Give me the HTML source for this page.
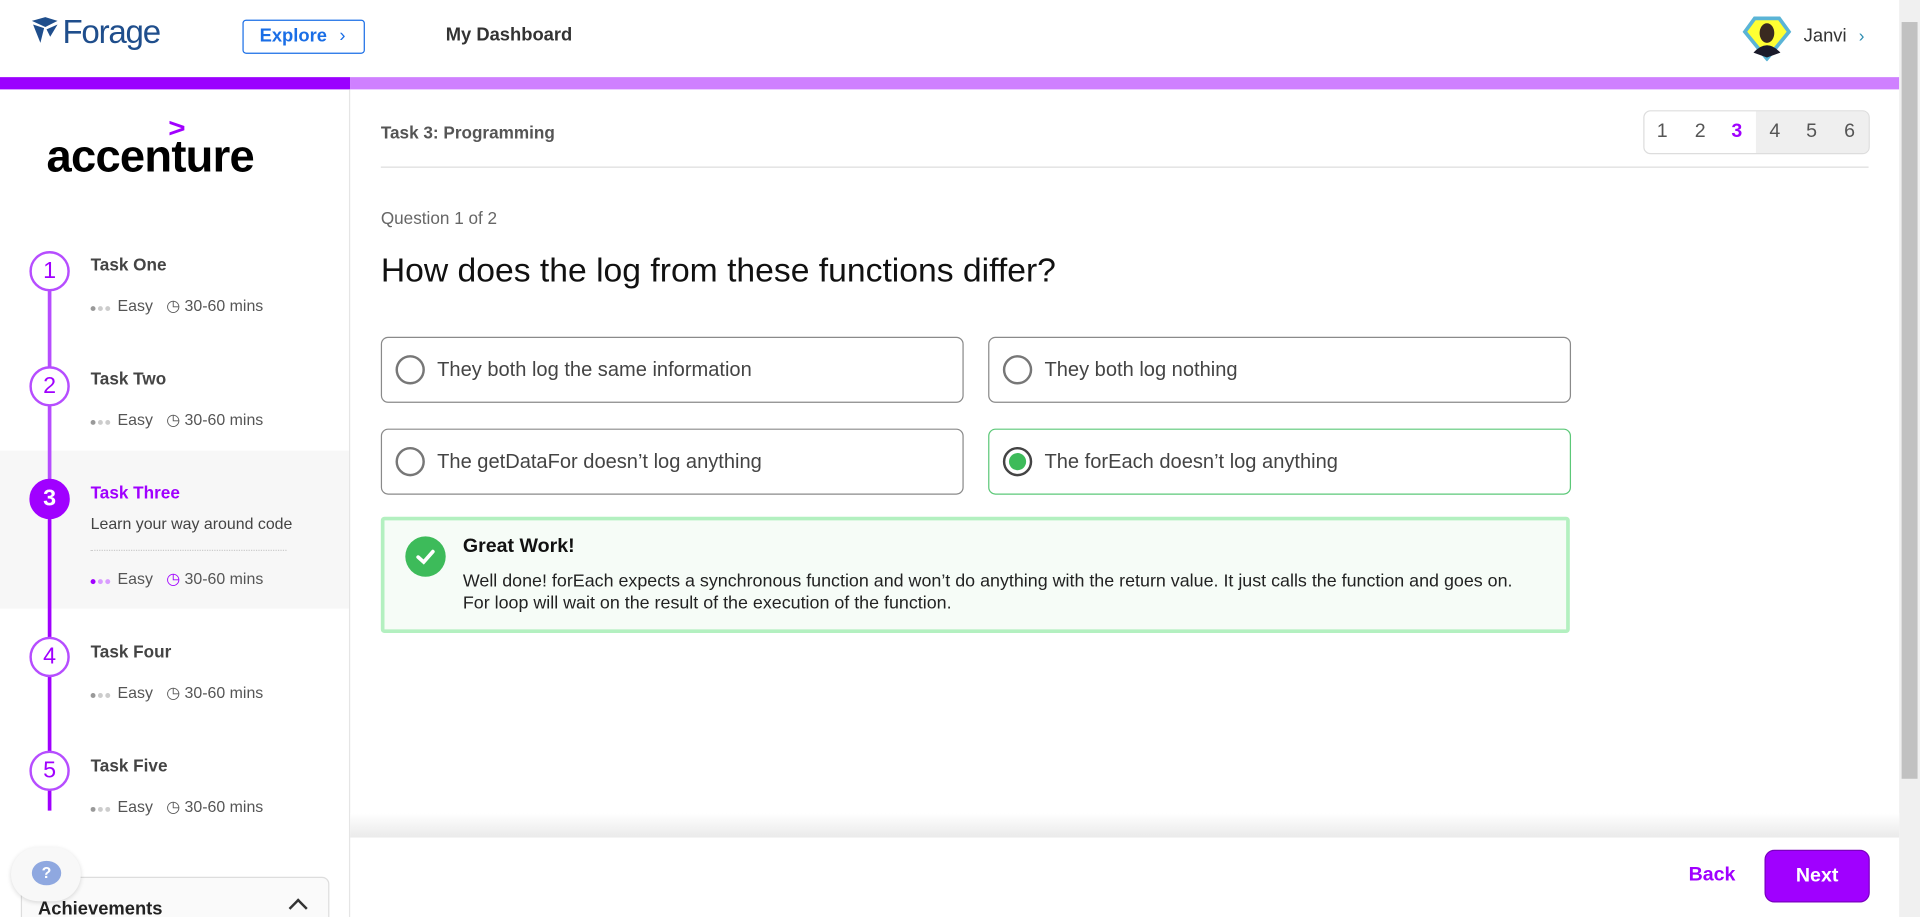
<!DOCTYPE html>
<html><head><meta charset="utf-8"><style>
*{box-sizing:border-box;margin:0;padding:0}
html,body{width:1920px;height:917px;overflow:hidden;background:#fff;font-family:"Liberation Sans",sans-serif}
#w{position:absolute;left:0;top:0;width:1568px;height:749px;transform:scale(1.22449);transform-origin:0 0;overflow:hidden}
.a{position:absolute}
.t{color:#444;font-size:14px;font-weight:bold}
.m{color:#555;font-size:13px}
.c{position:absolute;left:24px;width:33px;height:33px;border-radius:50%;border:2px solid #b64dff;background:#fff;color:#a000ff;font-size:19px;text-align:center;line-height:29px}
.opt{position:absolute;height:54px;border:1px solid #8a8a8a;border-radius:6px;font-size:16.4px;color:#444;padding-left:45px;line-height:52px;width:476px}
.opt i{position:absolute;left:11px;top:14px;width:24px;height:24px;border:2px solid #777;border-radius:50%}
.dots{display:inline-block;vertical-align:middle;margin-right:4px}
.dots b{display:inline-block;width:4px;height:4px;border-radius:50%;background:#ccc;margin-right:2px;vertical-align:middle}
</style></head><body><div id="w">
<div class="a" style="left:25px;top:13px;width:22px;height:22px">
<svg width="24" height="24" viewBox="0 0 24 24"><path d="M1 4 L12 1 L22 4 L12 9Z" fill="#1f4e8c"/><path d="M2 7 L11 10 L8 22Z" fill="#1f4e8c"/><path d="M13 11 L22 7 L16 17Z" fill="#1f4e8c"/></svg></div>
<div class="a" style="left:51px;top:11px;font-size:27px;color:#1f4e8c;letter-spacing:-1px">Forage</div>
<div class="a" style="left:198px;top:16px;width:100px;height:28px;border:1px solid #1a6ee6;border-radius:3px;color:#1a6ee6;font-size:15px;font-weight:bold;line-height:26px;padding-left:13px">Explore <span style="font-weight:normal;margin-left:6px">&#x203A;</span></div>
<div class="a" style="left:364px;top:20px;font-size:15px;font-weight:bold;color:#333">My Dashboard</div>
<div class="a" style="left:1423px;top:13px;width:40px;height:37px">
<svg width="40" height="37" viewBox="0 0 40 37"><path d="M10 2 H30 L38 13 L20 35 L2 13Z" fill="#ffff33" stroke="#5ab4d6" stroke-width="3"/><ellipse cx="20" cy="14" rx="6" ry="8" fill="#3a2a20"/><path d="M9 30 Q20 18 31 30 L20 34Z" fill="#1a1a2a"/></svg></div>
<div class="a" style="left:1473px;top:21px;font-size:15px;color:#333">Janvi</div>
<div class="a" style="left:1518px;top:21px;font-size:14px;color:#2a8bb0">&#x203A;</div>
<div class="a" style="left:0;top:63px;width:286px;height:10px;background:#9b00ff"></div>
<div class="a" style="left:286px;top:63px;width:1265px;height:10px;background:#cf80ff"></div>
<div class="a" style="left:1551px;top:0;width:17px;height:749px;background:#f0f0f0"></div>
<div class="a" style="left:1553px;top:18px;width:13px;height:618px;background:#c1c1c1"></div>
<div class="a" style="left:285px;top:73px;width:1px;height:676px;background:#e5e5e5"></div>
<div class="a" style="left:138px;top:92px;font-size:22px;font-weight:bold;color:#a100ff;transform:scaleX(1.1)">&gt;</div>
<div class="a" style="left:38px;top:107px;font-size:37px;font-weight:bold;color:#000;letter-spacing:-0.6px">accenture</div>
<div class="a" style="left:0;top:368px;width:285px;height:129px;background:#f7f7f7"></div>
<div class="a" style="left:39px;top:235px;width:3px;height:170px;background:#b64dff"></div>
<div class="a" style="left:39px;top:405px;width:3px;height:257px;background:#a000ff"></div>
<div class="c" style="top:205px">1</div>
<div class="c" style="top:299px">2</div>
<div class="c" style="top:391px;background:#a000ff;border-color:#a000ff;color:#fff;font-weight:bold">3</div>
<div class="c" style="top:520px">4</div>
<div class="c" style="top:613px">5</div>
<div class="a t" style="left:74px;top:208px">Task One</div>
<div class="a m" style="left:74px;top:242px"><span class="dots"><b style="background:#999"></b><b></b><b></b></span>Easy &nbsp; &#9719; 30-60 mins</div>
<div class="a t" style="left:74px;top:301px">Task Two</div>
<div class="a m" style="left:74px;top:335px"><span class="dots"><b style="background:#999"></b><b></b><b></b></span>Easy &nbsp; &#9719; 30-60 mins</div>
<div class="a t" style="left:74px;top:394px;color:#a000ff">Task Three</div>
<div class="a m" style="left:74px;top:420px;color:#444">Learn your way around code</div>
<div class="a" style="left:74px;top:449px;width:160px;border-top:1px dotted #ccc"></div>
<div class="a m" style="left:74px;top:465px"><span class="dots"><b style="background:#a000ff"></b><b style="background:#d99cff"></b><b style="background:#d99cff"></b></span>Easy &nbsp; <span style="color:#a000ff">&#9719;</span> 30-60 mins</div>
<div class="a t" style="left:74px;top:524px">Task Four</div>
<div class="a m" style="left:74px;top:558px"><span class="dots"><b style="background:#999"></b><b></b><b></b></span>Easy &nbsp; &#9719; 30-60 mins</div>
<div class="a t" style="left:74px;top:617px">Task Five</div>
<div class="a m" style="left:74px;top:651px"><span class="dots"><b style="background:#999"></b><b></b><b></b></span>Easy &nbsp; &#9719; 30-60 mins</div>
<div class="a" style="left:17px;top:716px;width:252px;height:50px;border:1px solid #ddd;border-radius:6px;background:#fafafa"></div>
<div class="a" style="left:31px;top:734px;font-size:15px;font-weight:bold;color:#222">Achievements</div>
<div class="a" style="left:238px;top:736px;width:11px;height:11px;border-left:2px solid #333;border-top:2px solid #333;transform:rotate(45deg)"></div>
<div class="a" style="left:9px;top:692px;width:57px;height:44px;border-radius:22px;background:#f8f8f8;box-shadow:0 1px 4px rgba(0,0,0,.15)"></div>
<div class="a" style="left:26px;top:703px;width:24px;height:20px;border-radius:50%;background:#8fa8e0;color:#fff;font-size:13px;font-weight:bold;text-align:center;line-height:20px">?</div>
<div class="a" style="left:311px;top:100px;font-size:14px;font-weight:bold;color:#555">Task 3: Programming</div>
<div class="a" style="left:311px;top:136px;width:1215px;height:1px;background:#ddd"></div>
<div class="a" style="left:1342px;top:90px;width:185px;height:36px;border:1px solid #ddd;border-radius:6px;overflow:hidden;font-size:16px;color:#555">
<div class="a" style="left:91px;top:0;width:94px;height:36px;background:#efefef"></div>
<span class="a" style="left:10px;top:8px">1</span><span class="a" style="left:41px;top:8px">2</span><span class="a" style="left:71px;top:8px;color:#a000ff;font-weight:bold">3</span><span class="a" style="left:102px;top:8px">4</span><span class="a" style="left:132px;top:8px">5</span><span class="a" style="left:163px;top:8px">6</span></div>
<div class="a" style="left:311px;top:170px;font-size:14px;color:#666">Question 1 of 2</div>
<div class="a" style="left:311px;top:205px;font-size:27.5px;color:#111">How does the log from these functions differ?</div>
<div class="opt" style="left:311px;top:275px"><i></i>They both log the same information</div>
<div class="opt" style="left:807px;top:275px"><i></i>They both log nothing</div>
<div class="opt" style="left:311px;top:350px"><i></i>The getDataFor doesn’t log anything</div>
<div class="opt" style="left:807px;top:350px;border-color:#5cc878"><i style="border-color:#444"><span style="position:absolute;left:3px;top:3px;width:14px;height:14px;border-radius:50%;background:#3dbb5a"></span></i>The forEach doesn’t log anything</div>
<div class="a" style="left:311px;top:422px;width:971px;height:95px;border:3px solid #b3f0c0;border-radius:3px;background:#f6fcf7"></div>
<div class="a" style="left:331px;top:438px;width:33px;height:33px;border-radius:50%;background:#3dbb5a"><svg width="33" height="33"><path d="M10.5 17 L15 21 L22.5 12.5" stroke="#fff" stroke-width="3" fill="none" stroke-linecap="round"/></svg></div>
<div class="a" style="left:378px;top:438px;font-size:16px;font-weight:bold;color:#111">Great Work!</div>
<div class="a" style="left:378px;top:466px;font-size:14.6px;line-height:18px;color:#222">Well done! forEach expects a synchronous function and won’t do anything with the return value. It just calls the function and goes on.<br>For loop will wait on the result of the execution of the function.</div>
<div class="a" style="left:286px;top:664px;width:1265px;height:20px;background:linear-gradient(#fff,#eaeaea)"></div>
<div class="a" style="left:1379px;top:706px;font-size:16px;font-weight:bold;color:#a000ff">Back</div>
<div class="a" style="left:1441px;top:694px;width:86px;height:43px;border-radius:8px;background:#a000ff;border:1px solid #7a00c0;color:#fff;font-size:16px;font-weight:bold;text-align:center;line-height:41px">Next</div>
</div></body></html>
